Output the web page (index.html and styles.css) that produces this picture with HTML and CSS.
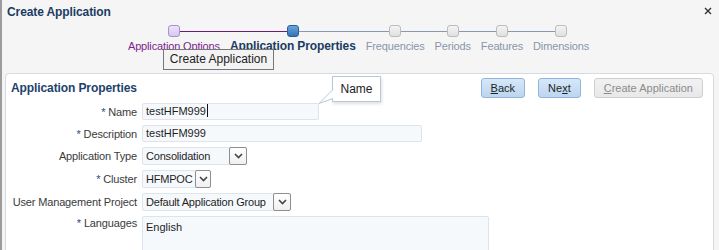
FILE: index.html
```html
<!DOCTYPE html>
<html lang="en">
<head>
<meta charset="UTF-8" />
<title>Create Application</title>
<link rel="stylesheet" href="styles.css">
</head>
<body>
<div class="window">
  <div class="titlebar">
    <h1>Create Application</h1>
    <svg class="close" width="8" height="8" viewBox="0 0 8 8"><path d="M1 1L7 7M7 1L1 7" stroke="#333" stroke-width="1.4"/></svg>
  </div>

  <div class="train">
    <div class="stop visited">
      <div class="track"><span class="line hidden"></span><span class="node"></span><span class="line done"></span></div>
      <div class="label">Application Options</div>
    </div>
    <div class="stop current">
      <div class="track"><span class="line done"></span><span class="node"></span><span class="line"></span></div>
      <div class="label">Application Properties</div>
    </div>
    <div class="stop">
      <div class="track"><span class="line"></span><span class="node"></span><span class="line"></span></div>
      <div class="label">Frequencies</div>
    </div>
    <div class="stop">
      <div class="track"><span class="line"></span><span class="node"></span><span class="line"></span></div>
      <div class="label">Periods</div>
    </div>
    <div class="stop">
      <div class="track"><span class="line"></span><span class="node"></span><span class="line"></span></div>
      <div class="label">Features</div>
    </div>
    <div class="stop">
      <div class="track"><span class="line"></span><span class="node"></span><span class="line hidden"></span></div>
      <div class="label">Dimensions</div>
    </div>
  </div>

  <div class="hint">Create Application</div>

  <div class="panel">
    <div class="panel-head">
      <h2>Application Properties</h2>
      <div class="actions">
        <button class="btn"><u>B</u>ack</button>
        <button class="btn">Ne<u>x</u>t</button>
        <button class="btn disabled"><u>C</u>reate Application</button>
      </div>
    </div>

    <div class="form">
      <label><span class="req">*</span> Name</label>
      <div class="field w-name">testHFM999<span class="caret"></span></div>

      <label><span class="req">*</span> Description</label>
      <div class="field w-desc">testHFM999</div>

      <label>Application Type</label>
      <div class="field select w-type"><span class="val">Consolidation</span><span class="dd"><svg width="9" height="6" viewBox="0 0 9 6"><path d="M1 1L4.5 4.5L8 1" fill="none" stroke="#444" stroke-width="1.6"/></svg></span></div>

      <label><span class="req">*</span> Cluster</label>
      <div class="field select w-cluster"><span class="val">HFMPOC</span><span class="dd"><svg width="9" height="6" viewBox="0 0 9 6"><path d="M1 1L4.5 4.5L8 1" fill="none" stroke="#444" stroke-width="1.6"/></svg></span></div>

      <label>User Management Project</label>
      <div class="field select w-ump"><span class="val">Default Application Group</span><span class="dd"><svg width="9" height="6" viewBox="0 0 9 6"><path d="M1 1L4.5 4.5L8 1" fill="none" stroke="#444" stroke-width="1.6"/></svg></span></div>

      <label class="top"><span class="req">*</span> Languages</label>
      <div class="field area">English</div>
    </div>

    <div class="name-tip">
      Name
      <svg class="tail" width="16" height="16" viewBox="0 0 16 16"><path d="M15 0.5L1 14.5L15 9.5" fill="#fff" stroke="#b9c7d6" stroke-width="1"/></svg>
    </div>
  </div>
</div>
</body>
</html>
```

FILE: styles.css
```css
body { margin: 0; background: #f5f5f5; font-family: "Liberation Sans", Arial, sans-serif; font-size: 11px; color: #333; }
.window { position: relative; height: 250px; overflow: hidden; border-left: 2px solid #9c9c9c; }

/* title */
.titlebar { display: flex; justify-content: space-between; align-items: flex-start; padding: 5px 7px 0 5px; }
.titlebar h1 { margin: 0; font-size: 12px; line-height: 14px; color: #1b3c62; font-weight: bold; letter-spacing: -0.1px; }
.close { margin-top: 2px; }

/* train */
.train { display: flex; justify-content: center; margin-top: 6px; padding-right: 4px; }
.stop { display: flex; flex-direction: column; align-items: stretch; }
.track { display: flex; align-items: center; height: 12px; }
.line { flex: 1; height: 1px; background: #8b97b2; }
.line.done { background: #6c1b7c; }
.line.hidden { visibility: hidden; }
.node { width: 10px; height: 10px; border: 1px solid #bcbcbc; border-radius: 3px; background: linear-gradient(#f4f4f4, #e0e0e0); }
.visited .node { border-color: #a692cc; background: linear-gradient(#ece4fa, #d5c8ef); }
.current .node { border-color: #2c5f94; background: linear-gradient(#6aa6dc, #2f74b8); }
.label { margin-top: 3px; padding: 0 5px; line-height: 13px; color: #8995a9; white-space: nowrap; text-align: center; letter-spacing: -0.15px; }
.visited .label { color: #7b1f8c; }
.current .label { color: #1b3c62; font-weight: bold; font-size: 12px; letter-spacing: -0.1px; }

.hint { position: absolute; left: 161px; top: 49px; width: 109px; height: 19px; line-height: 19px; text-align: center; font-size: 12px; color: #222; background: #f3f3f3; border: 1px solid #777; }

/* panel */
.panel { position: relative; margin: 20px 5px 0 3px; height: 200px; background: #fff; border: 1px solid #d3dbe4; border-radius: 4px; }
.panel-head { display: flex; justify-content: space-between; align-items: center; height: 20px; padding: 4px 10px 0 5px; }
.panel-head h2 { margin: 0; font-size: 12px; font-weight: bold; color: #1d426c; letter-spacing: -0.1px; }
.actions { display: flex; gap: 13px; }
.btn { height: 20px; padding: 0 9px; font-family: inherit; font-size: 11px; color: #1e1e1e; border: 1px solid #93b5db; border-radius: 3px; background: linear-gradient(#d6e8f9, #bcd5f0); }
.btn.disabled { color: #8c8c8c; border-color: #cfcfcf; background: linear-gradient(#f2f2f2, #e8e8e8); }

/* form */
.form { display: grid; grid-template-columns: 126px auto; column-gap: 5px; row-gap: 5px; margin-top: 5px; padding-left: 5px; justify-items: start; align-items: center; }
.form label { justify-self: end; color: #3a3a3a; white-space: nowrap; letter-spacing: -0.15px; }
.form label.top { align-self: start; margin-top: 1px; }
.req { color: #1d4f86; }
.field { box-sizing: border-box; height: 17px; line-height: 15px; padding: 0 3px; color: #1e1e1e; background: #f6f9fc; border: 1px solid #dde4ec; border-radius: 2px; white-space: nowrap; }
.w-name { width: 177px; }
.w-desc { width: 280px; }
.select { display: flex; align-items: center; gap: 3px; height: 18px; padding-right: 0; }
.select .val { flex: 1; letter-spacing: -0.2px; }
.w-type { width: 105px; }
.w-cluster { width: 69px; }
.w-ump { width: 149px; }
.dd { display: flex; align-items: center; justify-content: center; box-sizing: border-box; width: 18px; height: 18px; margin-right: -1px; border: 1px solid #8e8e8e; border-radius: 2px; background: linear-gradient(#fff, #f0f0f0); }
.area { width: 347px; height: 60px; padding-top: 3px; }
.caret { display: inline-block; width: 1px; height: 13px; margin-left: 1px; vertical-align: -2px; background: #111; }

.name-tip { position: absolute; left: 326px; top: 2px; width: 47px; height: 24px; line-height: 24px; text-align: center; font-size: 12px; color: #222; background: #fff; border: 1px solid #b9c7d6; box-shadow: 1px 2px 3px rgba(0,0,0,0.12); }
.tail { position: absolute; left: -15px; top: 12px; }
```
